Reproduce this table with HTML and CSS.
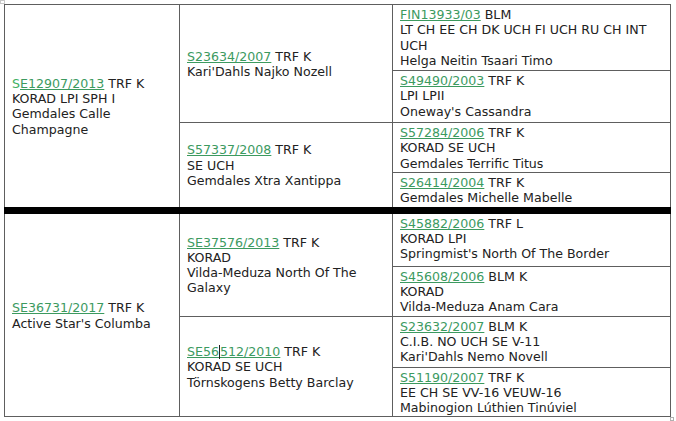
FILE: index.html
```html
<!DOCTYPE html>
<html>
<head>
<meta charset="utf-8">
<link rel="stylesheet" href="styles.css">
</head>
<body>
<div class="page">
<span class="move-handle"></span>
<table class="pedigree">
  <colgroup><col class="c1"><col class="c2"><col class="c3"></colgroup>
  <tr class="r1">
    <td class="mid" rowspan="4"><span class="lk-plain">S</span><a class="lk">E12907/2013</a> TRF K<br>KORAD LPI SPH I<br>Gemdales Calle<br>Champagne</td>
    <td class="mid" rowspan="2"><a class="lk">S23634/2007</a> TRF K<br>Kari'Dahls Najko Nozell</td>
    <td class="top"><a class="lk">FIN13933/03</a> BLM<br>LT CH EE CH DK UCH FI UCH RU CH INT UCH<br>Helga Neitin Tsaari Timo</td>
  </tr>
  <tr class="r2">
    <td class="top"><a class="lk">S49490/2003</a> TRF K<br>LPI LPII<br>Oneway's Cassandra</td>
  </tr>
  <tr class="r3">
    <td class="mid" rowspan="2"><a class="lk">S57337/2008</a> TRF K<br>SE UCH<br>Gemdales Xtra Xantippa</td>
    <td class="top"><a class="lk">S57284/2006</a> TRF K<br>KORAD SE UCH<br>Gemdales Terrific Titus</td>
  </tr>
  <tr class="r4">
    <td class="top"><a class="lk">S26414/2004</a> TRF K<br>Gemdales Michelle Mabelle</td>
  </tr>
  <tr class="r5 thick">
    <td class="mid" rowspan="4"><a class="lk">SE36731/2017</a> TRF K<br>Active Star's Columba</td>
    <td class="mid" rowspan="2"><a class="lk">SE37576/2013</a> TRF K<br>KORAD<br>Vilda-Meduza North Of The Galaxy</td>
    <td class="top"><a class="lk">S45882/2006</a> TRF L<br>KORAD LPI<br>Springmist's North Of The Border</td>
  </tr>
  <tr class="r6">
    <td class="top"><a class="lk">S45608/2006</a> BLM K<br>KORAD<br>Vilda-Meduza Anam Cara</td>
  </tr>
  <tr class="r7">
    <td class="mid" rowspan="2"><a class="lk">SE56<span class="caret"></span>512/2010</a> TRF K<br>KORAD SE UCH<br>Törnskogens Betty Barclay</td>
    <td class="top"><a class="lk">S23632/2007</a> BLM K<br>C.I.B. NO UCH SE V-11<br>Kari'Dahls Nemo Novell</td>
  </tr>
  <tr class="r8">
    <td class="top"><a class="lk">S51190/2007</a> TRF K<br>EE CH SE VV-16 VEUW-16<br>Mabinogion Lúthien Tinúviel</td>
  </tr>
</table>
<span class="resize-handle"></span>
</div>
</body>
</html>
```

FILE: styles.css
```css
html, body {
  margin: 0;
  padding: 0;
  background: #ffffff;
}
.page {
  position: relative;
  width: 676px;
  height: 421px;
  padding: 4px 0 0 4px;
  box-sizing: border-box;
}
.pedigree {
  border-collapse: collapse;
  table-layout: fixed;
  width: 666px;
  font-family: "DejaVu Sans", Verdana, sans-serif;
  font-size: 12.6px;
  line-height: 15.3px;
  color: #222222;
}
.c1 { width: 175px; }
.c2 { width: 213px; }
.c3 { width: 278px; }
.pedigree td {
  border: 1px solid #5e5e5e;
  padding: 2px 5px 1px 7px;
}
.pedigree td.top { vertical-align: top; }
.pedigree td.mid { vertical-align: middle; }
.pedigree tr.thick td { border-top: 7px solid #000; }
.r1 { height: 66px; }
.r2 { height: 52px; }
.r3 { height: 50px; }
.r4 { height: 35px; }
.r5 { height: 56px; }
.r6 { height: 50px; }
.r7 { height: 51px; }
.r8 { height: 49px; }
.lk {
  color: #3c9a5f;
  text-decoration: underline;
  text-decoration-color: #3c9a5f;
}
.lk-plain { color: #3fb062; }
.caret {
  display: inline-block;
  width: 1px;
  height: 14px;
  background: #222;
  vertical-align: -3px;
}
.move-handle {
  position: absolute;
  left: 0;
  top: 0;
  width: 3px;
  height: 2px;
  border: 1px solid #c8c8c8;
}
.resize-handle {
  position: absolute;
  left: 670px;
  top: 417px;
  width: 4px;
  height: 4px;
  border: 1px solid #b0b0b0;
  box-sizing: border-box;
}
```
